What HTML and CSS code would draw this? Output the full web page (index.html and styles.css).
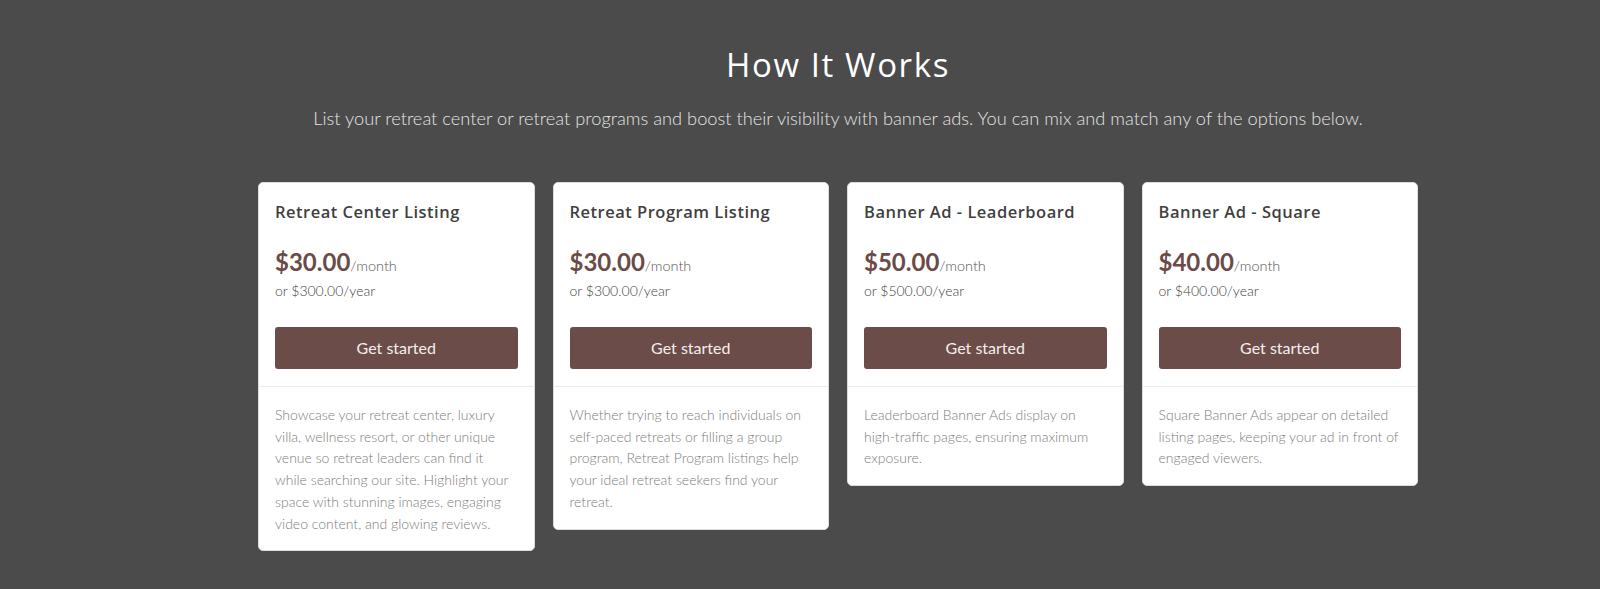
FILE: index.html
```html
<!DOCTYPE html>
<html lang="en">
<head>
<meta charset="utf-8">
<title>How It Works</title>
<link rel="stylesheet" href="styles.css">
</head>
<body>
<section class="how">
  <h1 class="how-title">How It Works</h1>
  <p class="how-sub">List your retreat center or retreat programs and boost their visibility with banner ads. You can mix and match any of the options below.</p>
  <div class="plans">
    <div class="plan">
      <div class="plan-top">
        <h2 class="plan-name">Retreat Center Listing</h2>
        <div class="plan-price"><span class="amount">$30.00</span><span class="per">/month</span></div>
        <div class="plan-year">or $300.00/year</div>
        <a class="plan-btn" href="#">Get started</a>
      </div>
      <p class="plan-desc">Showcase your retreat center, luxury villa, wellness resort, or other unique venue so retreat leaders can find it while searching our site. Highlight your space with stunning images, engaging video content, and glowing reviews.</p>
    </div>
    <div class="plan">
      <div class="plan-top">
        <h2 class="plan-name">Retreat Program Listing</h2>
        <div class="plan-price"><span class="amount">$30.00</span><span class="per">/month</span></div>
        <div class="plan-year">or $300.00/year</div>
        <a class="plan-btn" href="#">Get started</a>
      </div>
      <p class="plan-desc">Whether trying to reach individuals on self-paced retreats or filling a group program, Retreat Program listings help your ideal retreat seekers find your retreat.</p>
    </div>
    <div class="plan">
      <div class="plan-top">
        <h2 class="plan-name">Banner Ad - Leaderboard</h2>
        <div class="plan-price"><span class="amount">$50.00</span><span class="per">/month</span></div>
        <div class="plan-year">or $500.00/year</div>
        <a class="plan-btn" href="#">Get started</a>
      </div>
      <p class="plan-desc">Leaderboard Banner Ads display on high-traffic pages, ensuring maximum exposure.</p>
    </div>
    <div class="plan">
      <div class="plan-top">
        <h2 class="plan-name">Banner Ad - Square</h2>
        <div class="plan-price"><span class="amount">$40.00</span><span class="per">/month</span></div>
        <div class="plan-year">or $400.00/year</div>
        <a class="plan-btn" href="#">Get started</a>
      </div>
      <p class="plan-desc">Square Banner Ads appear on detailed listing pages, keeping your ad in front of engaged viewers.</p>
    </div>
  </div>
</section>
</body>
</html>
```

FILE: styles.css
```css
html, body {
  margin: 0;
  padding: 0;
}
body {
  background: #4b4b4b;
  font-family: Lato, "Liberation Sans", sans-serif;
  height: 589px;
  overflow: hidden;
}
.how {
  padding: 0 0 0 76px;
  text-align: center;
}
.how-title {
  margin: 0;
  padding-top: 43px;
  font-family: "Open Sans", "DejaVu Sans", sans-serif;
  font-weight: 500;
  font-size: 33px;
  letter-spacing: 1.6px;
  line-height: 44px;
  color: #ffffff;
}
.how-sub {
  margin: 18px 0 0;
  font-family: Lato, sans-serif;
  font-weight: 300;
  font-size: 18.25px;
  line-height: 26px;
  color: #e4e4e4;
}
.plans {
  margin-top: 51px;
  display: flex;
  justify-content: center;
  align-items: flex-start;
  gap: 18px;
  text-align: left;
}
.plan {
  width: 276.5px;
  box-sizing: border-box;
  background: #ffffff;
  border: 1px solid #dcdcdc;
  border-radius: 5px;
}
.plan-top {
  padding: 16px 16px 17px;
  border-bottom: 1px solid #ececec;
}
.plan-name {
  margin: 0;
  font-family: "Open Sans", "DejaVu Sans", sans-serif;
  font-weight: 600;
  font-size: 16.5px;
  letter-spacing: 0.5px;
  line-height: 22px;
  color: #3f3f3f;
  padding-top: 2px;
}
.plan-price {
  margin-top: 24px;
  line-height: 30px;
  color: #6b4a47;
}
.amount {
  font-weight: 700;
  font-size: 24px;
}
.per {
  font-size: 14.5px;
  font-weight: 300;
  color: #555555;
}
.plan-year {
  font-size: 14px;
  font-weight: 300;
  line-height: 20px;
  color: #444444;
  margin-top: 0;
}
.plan-btn {
  display: block;
  margin-top: 26px;
  height: 42px;
  line-height: 42px;
  background: #6b4c49;
  color: #f4efee;
  border-radius: 3px;
  text-align: center;
  font-size: 16px;
  text-decoration: none;
}
.plan-desc {
  margin: 0;
  padding: 17px 16px 16px;
  font-size: 14px;
  font-weight: 300;
  line-height: 21.7px;
  color: #7d7d7d;
}
```
